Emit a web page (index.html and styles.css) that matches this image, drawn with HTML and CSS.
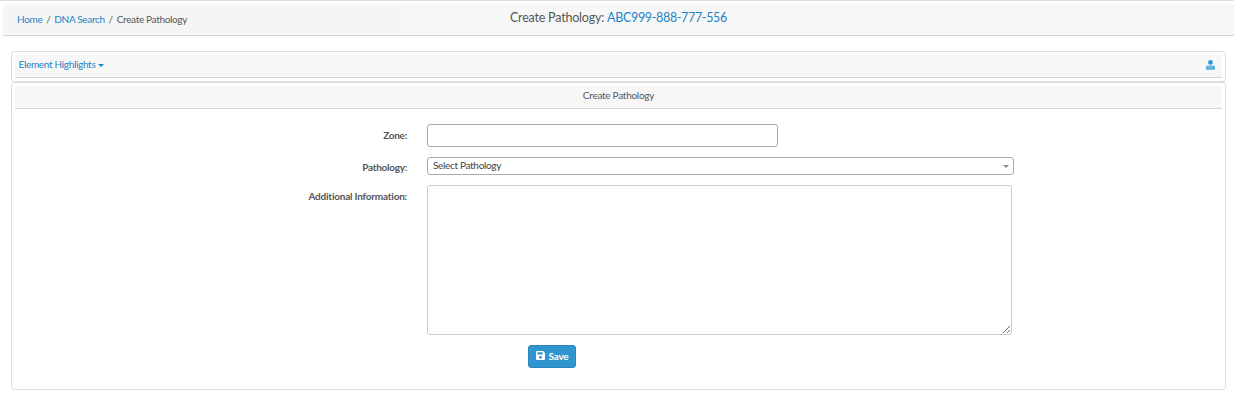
FILE: index.html
```html
<!DOCTYPE html>
<html lang="en">
<head>
<meta charset="utf-8">
<title>Create Pathology</title>
<link rel="stylesheet" href="styles.css">
</head>
<body>
<header class="topbar">
  <nav class="breadcrumb"><a href="#">Home</a><span class="sep">/</span><a href="#">DNA Search</a><span class="sep">/</span><span>Create Pathology</span></nav>
  <h1 class="page-title">Create Pathology: <a href="#">ABC999-888-777-556</a></h1>
</header>
<main class="content">
  <section class="panel">
    <div class="panel-head highlights">
      <a href="#" class="dropdown">Element Highlights<span class="caret"></span></a>
      <svg class="user-icon" viewBox="0 0 9 10" width="9" height="10"><circle cx="4.5" cy="2.4" r="2.4" fill="#2f96d0"/><path d="M3.6 4h1.8v2H3.6z" fill="#70b8df"/><path d="M0 9.8V7.6Q0 5.7 2 5.6L4.5 6.4 7 5.6Q9 5.7 9 7.6V9.8Z" fill="#60b0dc"/><path d="M1.5 7.3l1.5 1M4 7.1l1 1M6 8.2l1.5-.8" stroke="#2387c0" stroke-width=".8" fill="none"/><path d="M2.5 7l1 1.3M5.3 8.3l1-1.2" stroke="#d5ebf6" stroke-width=".6" fill="none"/></svg>
    </div>
  </section>
  <section class="panel form-panel">
    <h2 class="panel-head panel-title">Create Pathology</h2>
    <form class="form">
      <label class="label" for="zone">Zone:</label>
      <input class="zone" id="zone" type="text">
      <label class="label select-label" for="pathology">Pathology:</label>
      <div class="select" id="pathology"><span>Select Pathology</span><span class="arrow"></span></div>
      <label class="label info-label" for="info">Additional Information:</label>
      <textarea class="info" id="info"></textarea>
      <button class="save" type="button"><svg viewBox="0 0 9 9" width="9" height="9"><path fill="#fff" fill-rule="evenodd" d="M1 0H7L9 2V8Q9 9 8 9H1Q0 9 0 8V1Q0 0 1 0ZM1.5 1.3V3.6H6.6V1.3ZM4.5 5A1.4 1.4 0 1 0 4.5 7.8A1.4 1.4 0 1 0 4.5 5Z"/></svg>Save</button>
    </form>
  </section>
</main>
</body>
</html>
```
FILE: styles.css
```css
* { box-sizing: border-box; }
body {
  margin: 0;
  height: 400px;
  overflow: hidden;
  border-top: 1px solid #ddd;
  background: #fff;
  color: #54575a;
  font: 10px/14px Lato, sans-serif;
  letter-spacing: -0.27px;
}
a { color: #1c84c6; text-decoration: none; }
.topbar {
  display: grid;
  grid-template-columns: 394px 1fr;
  margin: 3px 0 0 3px;
  height: 32px;
  padding: 4px 0 0 4px;
  background: #f7f7f7;
  border-bottom: 1px solid #d5d5d5;
}
.breadcrumb {
  height: 24px;
  padding: 4px 10px;
  background: #f5f5f5;
  border-radius: 3px;
  letter-spacing: -0.33px;
  white-space: nowrap;
}
.sep { padding: 0 4px 0 3.8px; }
.page-title {
  margin: 2px 0 0 109px;
  font-size: 12.5px;
  line-height: 16px;
  font-weight: 400;
  letter-spacing: -0.21px;
  white-space: nowrap;
}
.page-title a { letter-spacing: -0.33px; }
.content { margin: 15px 8px 0 11px; }
.panel {
  height: 31px;
  padding: 3px;
  border: 1px solid #ddd;
  border-radius: 3px;
}
.panel-head {
  height: 23px;
  background: #f7f7f7;
  border-bottom: 1px solid #d5d5d5;
  border-radius: 3px 3px 0 0;
}
.highlights {
  display: flex;
  justify-content: space-between;
  padding: 2px 7px 0 3.5px;
}
.dropdown { letter-spacing: -0.32px; }
.caret {
  display: inline-block;
  margin-left: 2.5px;
  vertical-align: 1px;
  border: 3px solid transparent;
  border-top: 3px solid #1c84c6;
  border-bottom: 0;
}
.user-icon { margin-top: 3px; }
.form-panel { height: 308px; }
.panel-title {
  margin: 0;
  padding-top: 2px;
  font-size: 10px;
  line-height: 14px;
  font-weight: 400;
  text-align: center;
}
.form {
  display: grid;
  grid-template-columns: 392px 587px;
  grid-template-rows: 23px 18px 150px 23px;
  column-gap: 20px;
  row-gap: 10px;
  padding-top: 15px;
}
.label {
  padding-bottom: 1px;
  align-self: center;
  text-align: right;
  font-weight: 700;
  line-height: 14px;
}
.select-label { padding: 2px 0 0; }
.info-label {
  align-self: start;
  padding-top: 4px;
  letter-spacing: -0.21px;
}
.zone, .select, .info {
  background: #fff;
  border: 1px solid #aaa;
  border-radius: 3px;
}
.zone { width: 351px; height: 23px; }
.select {
  display: flex;
  justify-content: space-between;
  height: 18px;
  padding: 0 4px 0 5px;
  color: #444;
  letter-spacing: -0.32px;
}
.arrow {
  margin-top: 7px;
  height: 3px;
  border: 3px solid transparent;
  border-top: 3px solid #888;
  border-bottom: 0;
}
.info {
  width: 585px;
  height: 150px;
  border-color: #ccc;
}
.save {
  grid-column: 2;
  display: flex;
  align-items: center;
  justify-content: center;
  gap: 4px;
  width: 48px;
  height: 23px;
  margin-left: 101px;
  padding: 0 0 2px;
  background: #2f96d0;
  border: 1px solid #2a87bb;
  border-radius: 3px;
  color: #fff;
  font: 700 10px/14px Lato, sans-serif;
  letter-spacing: -0.27px;
}
```
